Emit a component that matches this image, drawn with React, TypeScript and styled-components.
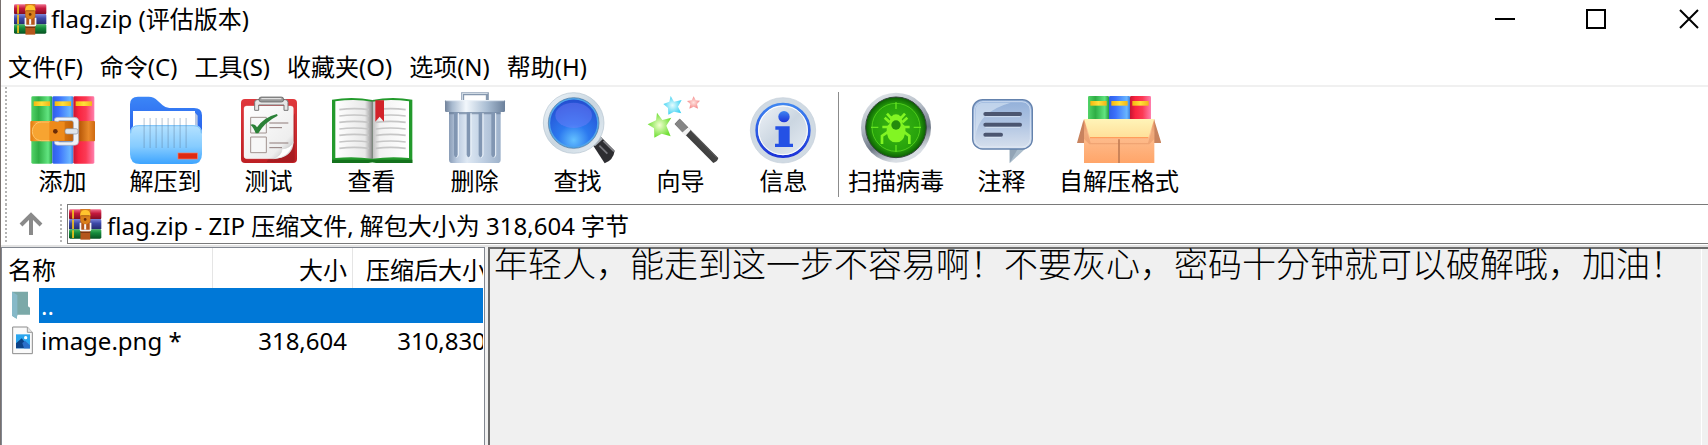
import React from 'react';
import styled, { createGlobalStyle } from 'styled-components';

const GlobalStyle = createGlobalStyle`
  * { box-sizing: border-box; }
  body {
    margin: 0;
    background: #fff;
    color: #000;
    font-family: "Noto Sans", "Noto Sans CJK SC", sans-serif;
    font-size: 24px;
    font-weight: 400;
    line-height: 32px;
  }
  button, input {
    font: inherit;
    color: inherit;
    background: none;
    border: 0;
    padding: 0;
    margin: 0;
  }
`;

const Window = styled.div`
  display: flex;
  flex-direction: column;
  min-height: 100vh;
  border-left: 1px solid #77706e;
  overflow: hidden;
`;

const TitleBar = styled.header`
  display: flex;
  align-items: center;
  height: 38px;
  padding-left: 13px;
`;

const Title = styled.h1`
  flex: 1;
  margin: 0 0 0 4px;
  font: inherit;
  white-space: nowrap;
`;

const WindowButton = styled.button`
  display: grid;
  place-items: center;
  width: 91px;
  height: 38px;

  &:last-child {
    width: 38px;
    margin-left: 29px;
  }
`;

const MenuBar = styled.nav`
  display: flex;
  gap: 17px;
  height: 49px;
  padding: 13px 0 0 7px;
  border-bottom: 2px solid #f0f0f0;
  white-space: nowrap;
`;

const MenuItem = styled.button`
  height: 32px;
`;

const Grip = styled.span`
  width: 2px;
  background: repeating-linear-gradient(#b4b4b4 0 2px, transparent 2px 4px);
`;

const ToolBar = styled.div`
  display: flex;
  height: 117px;
  padding-left: 4px;
  white-space: nowrap;
`;

const Tools = styled.div`
  display: flex;
  padding: 5px 0 0 4px;
`;

const ToolButton = styled.button`
  display: flex;
  flex-direction: column;
  align-items: center;
  gap: 1px;
  min-width: 103px;
  height: 105px;
  padding: 0 6px;
`;

const ToolIcon = styled.svg`
  flex: none;
  width: 84px;
  height: 72px;
`;

const Divider = styled.span`
  width: 1px;
  height: 105px;
  margin: 0 3px;
  background: #8c8c8c;
`;

const AddressBar = styled.div`
  display: flex;
  height: 41px;
  padding-left: 4px;
  border-bottom: 1px solid #fff;
`;

const UpButton = styled.button`
  display: grid;
  place-items: center;
  width: 53px;
  padding-right: 5px;
`;

const AddressField = styled.label`
  display: flex;
  flex: 1;
  align-items: center;
  gap: 5px;
  margin-left: 5px;
  padding-left: 1px;
  border: 1px solid #7a7a7a;
  border-right: 0;
`;

const AddressInput = styled.input`
  flex: 1;
  min-width: 0;
  height: 34px;
  outline: 0;
`;

const Panes = styled.main`
  display: flex;
  flex: 1;
  gap: 3px;
  border-top: 2px solid #e3e3e3;
  background: #f0f0f0;
`;

const FilePane = styled.section`
  flex: none;
  width: 484px;
  padding-right: 1px;
  background: #fff;
  border: 1px solid #828790;
  border-bottom: 0;
`;

const TableClip = styled.div`
  overflow: hidden;
`;

const FileTable = styled.table`
  width: 490px;
  table-layout: fixed;
  border-collapse: separate;
  border-spacing: 0;
  white-space: nowrap;
`;

const HeadCell = styled.th<{ $width: number; $right?: boolean }>`
  width: ${p => p.$width}px;
  height: 40px;
  padding: ${p => (p.$right ? '4px 5px 0 0' : '4px 0 0 6px')};
  border-right: 1px solid #e5e5e5;
  font-weight: inherit;
  text-align: ${p => (p.$right ? 'right' : 'left')};
`;

const Cell = styled.td<{ $selected?: boolean }>`
  height: 35px;
  padding: 0 6px 0 0;
  text-align: right;
  background: ${p => (p.$selected ? '#0078d7' : 'transparent')};
`;

const NameCell = styled.td`
  height: 35px;
  padding: 0;
`;

const NameContent = styled.div`
  display: grid;
  grid-template-columns: 37px 1fr;
  align-items: center;
  height: 35px;
`;

const FileIcon = styled.svg`
  width: 21px;
  height: 29px;
  margin-left: 10px;
`;

const FileName = styled.span<{ $selected?: boolean }>`
  height: 35px;
  padding-left: 2px;
  line-height: 35px;
  color: ${p => (p.$selected ? '#fff' : '#000')};
  background: ${p => (p.$selected ? '#0078d7' : 'transparent')};
`;

const CommentPane = styled.section`
  display: flex;
  flex: 1;
  min-width: 0;
  border: 2px solid #696969;
  border-width: 2px 0 0 2px;
  border-top-color: #6e6e6e;
`;

const Comment = styled.p`
  flex: 1;
  min-width: 0;
  margin: 0;
  padding-left: 4px;
  font-family: "Noto Sans CJK SC", sans-serif;
  font-size: 34px;
  font-weight: 300;
  line-height: 28px;
`;

const ScrollTrack = styled.div`
  width: 7px;
  border-left: 1px solid #fff;
`;

const Books = ({ top, bottom }: { top: number; bottom: number }) => (
  <>
    <linearGradient id="bkG"><stop offset="0" stopColor="#52d468" /><stop offset=".35" stopColor="#2fae45" /><stop offset=".8" stopColor="#62e581" /><stop offset="1" stopColor="#259b3d" /></linearGradient>
    <linearGradient id="bkB"><stop offset="0" stopColor="#2f5fe6" /><stop offset=".3" stopColor="#3b70fb" /><stop offset=".85" stopColor="#69b6ff" /><stop offset="1" stopColor="#3c7edc" /></linearGradient>
    <linearGradient id="bkR"><stop offset="0" stopColor="#c61533" /><stop offset=".25" stopColor="#f9233f" /><stop offset=".6" stopColor="#fb3a55" /><stop offset="1" stopColor="#ff7fae" /></linearGradient>
    <linearGradient id="bkY"><stop offset="0" stopColor="#f6b70f" /><stop offset=".5" stopColor="#ffe03a" /><stop offset="1" stopColor="#f2b418" /></linearGradient>
    {['bkG', 'bkB', 'bkR'].map((id, i) => (
      <g key={id}>
        <rect x={94 + i * 63} y={top} width="63" height={bottom - top} rx="4" fill={`url(#${id})`} />
        <rect x={101 + i * 63} y={top + 15} width="49" height="14" fill="url(#bkY)" />
      </g>
    ))}
  </>
);

const AddIcon = () => (
  <ToolIcon viewBox="63 276 252 216">
    <Books top={289} bottom={491} />
    <linearGradient id="strap"><stop offset="0" stopColor="#e27a0c" /><stop offset=".12" stopColor="#f9a93a" /><stop offset=".35" stopColor="#ee8a17" /><stop offset=".75" stopColor="#b55506" /><stop offset=".9" stopColor="#e8892a" /><stop offset="1" stopColor="#cf6a10" /></linearGradient>
    <rect x="91" y="363" width="194" height="61" rx="3" fill="url(#strap)" />
    <path d="M150 366H124C88 368 88 420 124 422H150" fill="#f7a431" stroke="#ffc56b" strokeWidth="3" />
    <rect x="148" y="366" width="46" height="56" fill="#ee8a1a" />
    <circle cx="166" cy="394" r="7" fill="#6b2c07" />
    <path d="M163 363v-3q0-8 10-8h51q12 0 12 12v60q0 12-12 12h-51q-10 0-10-9v-3h11q2 2 6 2h34q6 0 6-6v-52q0-6-6-6h-34q-4 0-6 3z" fill="#eef2f7" stroke="#9ba3b3" strokeWidth="2" />
    <rect x="195" y="386" width="39" height="16" rx="6" fill="#dfe5ec" stroke="#8c8f9c" strokeWidth="2" />
  </ToolIcon>
);

const ExtractIcon = () => (
  <ToolIcon viewBox="372 276 252 216">
    <linearGradient id="fBack" x2="0" y2="1"><stop offset="0" stopColor="#3b86f7" /><stop offset="1" stopColor="#2254e8" /></linearGradient>
    <linearGradient id="fFront" x2="0" y2="1"><stop offset="0" stopColor="#b5e2ff" /><stop offset=".55" stopColor="#86ccff" /><stop offset="1" stopColor="#3da4ff" /></linearGradient>
    <path d="M390 430V313q0-23 24-23h32q16 0 27 12l15 14q9 8 20 8h74q24 0 24 22v90z" fill="url(#fBack)" />
    <path d="M399 333h182l12 14v50H399z" fill="#b9c7e2" />
    <path d="M399 333h186v50H399z" fill="#fff" />
    <path d="M390 400q0-25 26-25h164q26 0 26 25v62q0 30-30 30H420q-30 0-30-30z" fill="url(#fFront)" />
    <path d="M392 400q0-23 24-23h164q24 0 24 23" fill="none" stroke="#5fb2f5" strokeWidth="2" />
    {[430, 448, 466, 484, 502, 520, 538, 556].map(x => (
      <rect key={x} x={x} y="354" width="5" height="90" fill="#5c7f9f" opacity=".28" />
    ))}
    <rect x="534" y="459" width="58" height="18" fill="#df2a12" stroke="#ff7a5e" strokeWidth="2" />
  </ToolIcon>
);

const TestIcon = () => (
  <ToolIcon viewBox="681 276 252 216">
    <linearGradient id="tRed" x2="0" y2="1"><stop offset="0" stopColor="#e0383c" /><stop offset="1" stopColor="#bd1f24" /></linearGradient>
    <linearGradient id="tPaper" x2="1" y2="1"><stop offset="0" stopColor="#fff" /><stop offset=".75" stopColor="#eee" /><stop offset="1" stopColor="#aaa" /></linearGradient>
    <rect x="723" y="297" width="168" height="192" rx="12" fill="url(#tRed)" />
    <path d="M884 340v139q0 7-8 7H800z" fill="#8e171c" opacity=".5" />
    <path d="M732 326q0-8 8-8h132q8 0 8 8v102q-2 44-58 48h-82q-8 0-8-8z" fill="url(#tPaper)" stroke="#fff" />
    <path d="M880 425q-8 20-34 22 0 20-26 29 52-2 60-51z" fill="#fff" stroke="#c9c9c9" />
    <path d="M764 331v-24q0-8 8-8h84q8 0 8 8v24h-12v-16h-76v16z" fill="#e6e6e6" stroke="#777" strokeWidth="3" />
    <rect x="777" y="291" width="74" height="15" rx="7" fill="#999" stroke="#555" strokeWidth="2" />
    <path d="M784 296h60" stroke="#eee" strokeWidth="3" />
    <path d="M752 352h47v47h-47zM752 411h47v47h-47z" fill="#f7f7f7" stroke="#a0928f" strokeWidth="3" />
    <path d="M808 369h57M808 383h38M808 429h57M808 443h38" stroke="#8e7a78" strokeWidth="3" />
    <path d="M751 374q13-5 20 8 22-31 60-40l2 5q-40 20-58 53h-8q-6-18-16-26z" fill="#2b8137" />
  </ToolIcon>
);

const ViewIcon = () => (
  <ToolIcon viewBox="60 21 252 216">
    <linearGradient id="vL"><stop offset="0" stopColor="#fff" /><stop offset=".8" stopColor="#e8e8e8" /><stop offset="1" stopColor="#8f8f8f" /></linearGradient>
    <linearGradient id="vR"><stop offset="0" stopColor="#bdbdbd" /><stop offset=".2" stopColor="#f2f2f2" /><stop offset="1" stopColor="#fff" /></linearGradient>
    <path d="M66 44q62-10 121 1 58-11 120-1v190H200q-13-4-26 0H66z" fill="#239a2c" />
    <path d="M66 224h241v10H200q-13-4-26 0H66z" fill="#14721d" />
    <path d="M76 49q60-8 111 1v171q-56-8-111-2z" fill="url(#vL)" />
    <path d="M187 50q50-9 110-1v170q-54-6-110 2z" fill="url(#vR)" />
    <path d="M187 45v176" stroke="#666" strokeWidth="2" />
    {[74, 93, 112, 132, 151, 171, 190].map(y => (
      <path key={y} d={`M88 ${y}q45-6 89 0M197 ${y}q45-6 90 0`} fill="none" stroke="#c6c6c6" strokeWidth="5" />
    ))}
    <path d="M196 46h26v64l-13-15-13 15z" fill="#d2232a" />
  </ToolIcon>
);

const DeleteIcon = () => (
  <ToolIcon viewBox="369 21 252 216">
    <linearGradient id="dB"><stop offset="0" stopColor="#8a9db7" /><stop offset=".15" stopColor="#b9c9de" /><stop offset=".35" stopColor="#dfe9f4" /><stop offset=".65" stopColor="#c0d0e3" /><stop offset="1" stopColor="#9db1ca" /></linearGradient>
    <linearGradient id="dL"><stop offset="0" stopColor="#71829a" /><stop offset=".12" stopColor="#a8bacf" /><stop offset=".35" stopColor="#f2f7fc" /><stop offset=".7" stopColor="#a9bdd3" /><stop offset="1" stopColor="#6b809b" /></linearGradient>
    <path d="M458 50V26h74v24" fill="none" stroke="#8698ae" strokeWidth="9" />
    <path d="M457 48V25h76" fill="none" stroke="#dfe7f0" strokeWidth="3" />
    <path d="M417 78h155v146q0 10-10 10H427q-10 0-10-10z" fill="url(#dB)" />
    <path d="M417 80h155v8H417z" fill="#5f7591" opacity=".6" />
    {[432, 470, 506, 544].map(x => (
      <g key={x}>
        <path d={`M${x} 82h11v128q-5 14-11 0z`} fill="#8196b2" />
        <path d={`M${x + 13} 84v126q-2 6-5 8`} fill="none" stroke="#eef4fa" strokeWidth="3" />
      </g>
    ))}
    <rect x="405" y="45" width="180" height="36" rx="4" fill="url(#dL)" />
    <path d="M407 47h176" stroke="#eef3f9" strokeWidth="3" />
  </ToolIcon>
);

const FindIcon = () => (
  <ToolIcon viewBox="678 21 252 216">
    <radialGradient id="sG" cx=".5" cy=".85" r=".8"><stop offset="0" stopColor="#63c0ff" /><stop offset=".4" stopColor="#2c79ef" /><stop offset="1" stopColor="#2450d2" /></radialGradient>
    <linearGradient id="sR" x2="1" y2="1"><stop offset="0" stopColor="#eef5fa" /><stop offset=".5" stopColor="#c9d6e0" /><stop offset="1" stopColor="#e6eef4" /></linearGradient>
    <path d="M844 173l26-20 44 44q-4 28-30 38z" fill="#2d2d31" />
    <path d="M844 173l26-20 9 9-24 22z" fill="#aab0b6" />
    <path d="M880 168l32 31" stroke="#85858a" strokeWidth="5" />
    <path d="M868 182l24 24" stroke="#77777d" strokeWidth="5" />
    <circle cx="791" cy="114" r="91" fill="url(#sR)" stroke="#b4c2ce" strokeWidth="2" />
    <circle cx="791" cy="114" r="73" fill="url(#sG)" stroke="#4fa5ea" strokeWidth="5" />
    <circle cx="791" cy="114" r="76" fill="none" stroke="#48709c" strokeWidth="2" />
    <ellipse cx="791" cy="91" rx="55" ry="38" fill="#8080ff" opacity=".38" />
  </ToolIcon>
);

const WizardIcon = () => (
  <ToolIcon viewBox="57 21 252 216">
    <radialGradient id="wG"><stop offset="0" stopColor="#f2ffd0" /><stop offset="1" stopColor="#70df35" /></radialGradient>
    <radialGradient id="wC"><stop offset="0" stopColor="#e5fdff" /><stop offset="1" stopColor="#48d3f2" /></radialGradient>
    <radialGradient id="wP"><stop offset="0" stopColor="#ffe3df" /><stop offset="1" stopColor="#f58c8c" /></radialGradient>
    <path d="M111 83l16 22 27-7-15 24 13 32-27-8-22 12-1-28-19-12 25-12z" fill="url(#wG)" />
    <path d="M152 33l10 17 23-5-11 20 10 20-22-5-17 9-1-20-14-12 18-7z" fill="url(#wC)" />
    <path d="M221 34l6 12 13 1-9 10 3 14-13-6-13 6 3-14-10-9 14-2z" fill="url(#wP)" />
    <linearGradient id="wS" x1="0" y1="1" x2=".5" y2=".5"><stop offset="0" stopColor="#111" /><stop offset="1" stopColor="#444" /></linearGradient>
    <path d="M164 117l15-16 116 118q-2 10-15 15z" fill="url(#wS)" />
    <path d="M164 117l15-16 24 25-15 17z" fill="#858585" />
    <path d="M186 143l19-17 8 8-16 18z" fill="#f2f2f2" />
    <path d="M214 139l77 79" stroke="#666" strokeWidth="3" />
  </ToolIcon>
);

const InfoIcon = () => (
  <ToolIcon viewBox="366 21 252 216">
    <linearGradient id="iS" x2="1" y2="1"><stop offset="0" stopColor="#f1f5f9" /><stop offset=".5" stopColor="#cbd6e1" /><stop offset="1" stopColor="#e9eff5" /></linearGradient>
    <linearGradient id="iB" x2="0" y2="1"><stop offset="0" stopColor="#3f86f1" /><stop offset="1" stopColor="#1c33d8" /></linearGradient>
    <circle cx="489" cy="136" r="98" fill="#d0dae3" stroke="#c4cfd9" strokeWidth="2" />
    <circle cx="489" cy="136" r="79" fill="url(#iS)" stroke="url(#iB)" strokeWidth="8" />
    <circle cx="489" cy="136" r="73" fill="none" stroke="#fff" strokeWidth="3" />
    <circle cx="492" cy="95" r="17" fill="url(#iB)" />
    <path d="M466 124h43v52h10v10h-54v-10h11v-42h-10z" fill="#2451e5" />
  </ToolIcon>
);

const VirusIcon = () => (
  <ToolIcon viewBox="705 21 252 216">
    <linearGradient id="xS" x2=".4" y2="1"><stop offset="0" stopColor="#edf1f4" /><stop offset=".45" stopColor="#b2bac4" /><stop offset=".75" stopColor="#6f7987" /><stop offset="1" stopColor="#d9dee4" /></linearGradient>
    <radialGradient id="xG"><stop offset="0" stopColor="#3bb516" /><stop offset=".75" stopColor="#27a30b" /><stop offset="1" stopColor="#0c5e04" /></radialGradient>
    <circle cx="831" cy="128" r="105" fill="url(#xS)" />
    <circle cx="831" cy="127" r="91" fill="url(#xG)" stroke="#34463a" strokeWidth="3" />
    <circle cx="831" cy="127" r="72" fill="none" stroke="#61df24" strokeWidth="3" opacity=".7" />
    <path d="M831 52v20M831 180v20M756 127h22M884 127h22" stroke="#64e41f" strokeWidth="4" />
    <g fill="none" stroke="#82f523" strokeWidth="8">
      <path d="M804 86l11 12h32l11-12M812 112l-15-14M850 112l15-14M810 126h-20M852 126h20M808 140l-19 13v24M854 140l17 13v24" />
    </g>
    <path d="M811 117q2-29 20-29t20 29q12 8 7 29-5 26-27 26t-27-26q-4-21 7-29z" fill="#82f523" />
    <circle cx="831" cy="120" r="14" fill="#248c0c" />
  </ToolIcon>
);

const CommentIcon = () => (
  <ToolIcon viewBox="90 21 252 216">
    <linearGradient id="cB" x2="0" y2="1"><stop offset="0" stopColor="#91afd9" /><stop offset=".5" stopColor="#b1c5e2" /><stop offset="1" stopColor="#d8e1ee" /></linearGradient>
    <path d="M239 188h50l-50 47z" fill="#aabccb" />
    <path d="M239 192h24l-24 42z" fill="#8294a8" opacity=".6" />
    <rect x="128" y="44" width="179" height="148" rx="30" fill="url(#cB)" stroke="#6482ad" strokeWidth="4" />
    <path d="M137 155q5-74 105-102H160q-23 0-23 23z" fill="#e2ecf8" opacity=".55" />
    <rect x="134" y="50" width="167" height="136" rx="25" fill="none" stroke="#e5eefa" strokeWidth="3" opacity=".7" />
    <g stroke="#4c5670" strokeWidth="12" strokeLinecap="round"><path d="M166 87h104M166 119h104M166 149h47" /></g>
    <g stroke="#e6eef8" strokeWidth="2"><path d="M166 95h104M166 127h104M166 157h47" /></g>
  </ToolIcon>
);

const SfxIcon = () => (
  <ToolIcon viewBox="441 21 252 216">
    <linearGradient id="bx" x2="0" y2="1"><stop offset="0" stopColor="#e89260" /><stop offset=".3" stopColor="#fdc093" /><stop offset="1" stopColor="#ffa569" /></linearGradient>
    <linearGradient id="fl" x2="0" y2="1"><stop offset="0" stopColor="#fff4b8" /><stop offset="1" stopColor="#ffdf99" /></linearGradient>
    <g transform="translate(380 -256)"><Books top={289} bottom={362} /></g>
    <path d="M461 103l-20 71h26zM672 103l22 71h-28z" fill="#c8835e" />
    <path d="M462 103h211v131H462z" fill="url(#bx)" />
    <path d="M462 110l20 64h172l19-64v52l-15 16H478l-16-16z" fill="#cf7b4b" opacity=".3" />
    <path d="M462 102h211l-18 57H480z" fill="url(#fl)" />
    <path d="M480 158h175" stroke="#ff9150" strokeWidth="3" />
    <path d="M567 163v71" stroke="#c27c54" strokeWidth="5" />
  </ToolIcon>
);

const ArchiveIcon = () => (
  <svg width="33" height="31" viewBox="42 11 98 92" aria-hidden="true">
    <linearGradient id="ar" x2="0" y2="1"><stop offset="0" stopColor="#ef6d8a" /><stop offset=".4" stopColor="#c4193c" /><stop offset="1" stopColor="#7d0c22" /></linearGradient>
    <linearGradient id="ab" x2="0" y2="1"><stop offset="0" stopColor="#7d86d8" /><stop offset=".4" stopColor="#3d49a8" /><stop offset="1" stopColor="#252a6c" /></linearGradient>
    <linearGradient id="ag" x2="0" y2="1"><stop offset="0" stopColor="#49b864" /><stop offset=".4" stopColor="#158a3b" /><stop offset="1" stopColor="#075322" /></linearGradient>
    <rect x="42" y="12" width="96" height="30" rx="4" fill="url(#ar)" />
    <rect x="42" y="41" width="96" height="31" rx="4" fill="url(#ab)" />
    <rect x="42" y="71" width="96" height="28" rx="4" fill="url(#ag)" />
    <path d="M54 14v26M54 43v27M54 74v23" stroke="#f5c51c" strokeWidth="5" />
    <rect x="76" y="12" width="29" height="90" fill="#b4561b" />
    <path d="M76 12h29v34q-4 10-14 10t-15-10z" fill="#d9801c" />
    <path d="M75 30q1-16 15-16t16 16z" fill="#ffc42e" />
    <path d="M78 31h25" stroke="#8f4a10" strokeWidth="2" />
    <circle cx="90" cy="42" r="4" fill="#6b2c07" />
    <path d="M76 52v20q0 3 4 3h22q4 0 4-3V52" fill="none" stroke="#f4f4f4" strokeWidth="5" />
    <path d="M90 56v16" stroke="#f8f8f8" strokeWidth="6" />
    <path d="M76 80h29" stroke="#6c2c0c" strokeWidth="3" />
  </svg>
);

const TOOLS = [
  { label: '添加', Icon: AddIcon },
  { label: '解压到', Icon: ExtractIcon },
  { label: '测试', Icon: TestIcon },
  { label: '查看', Icon: ViewIcon },
  { label: '删除', Icon: DeleteIcon },
  { label: '查找', Icon: FindIcon },
  { label: '向导', Icon: WizardIcon },
  { label: '信息', Icon: InfoIcon },
];

const EXTRA_TOOLS = [
  { label: '扫描病毒', Icon: VirusIcon },
  { label: '注释', Icon: CommentIcon },
  { label: '自解压格式', Icon: SfxIcon },
];

const MENUS = ['文件(F)', '命令(C)', '工具(S)', '收藏夹(O)', '选项(N)', '帮助(H)'];

export default function App() {
  return (
    <Window>
      <GlobalStyle />
      <TitleBar>
        <ArchiveIcon />
        <Title>flag.zip (评估版本)</Title>
        <WindowButton aria-label="最小化">
          <svg width="20" height="20"><path d="M0 10h20" stroke="#000" strokeWidth="2" /></svg>
        </WindowButton>
        <WindowButton aria-label="最大化">
          <svg width="20" height="20"><path d="M1 1h18v18H1z" fill="none" stroke="#000" strokeWidth="2" /></svg>
        </WindowButton>
        <WindowButton aria-label="关闭">
          <svg width="20" height="20"><path d="M1 1l18 18M19 1L1 19" stroke="#000" strokeWidth="2" /></svg>
        </WindowButton>
      </TitleBar>
      <MenuBar>
        {MENUS.map(m => <MenuItem key={m}>{m}</MenuItem>)}
      </MenuBar>
      <ToolBar>
        <Grip />
        <Tools>
          {TOOLS.map(({ label, Icon }) => (
            <ToolButton key={label}><Icon />{label}</ToolButton>
          ))}
          <Divider />
          {EXTRA_TOOLS.map(({ label, Icon }) => (
            <ToolButton key={label}><Icon />{label}</ToolButton>
          ))}
        </Tools>
      </ToolBar>
      <AddressBar>
        <Grip />
        <UpButton aria-label="向上">
          <svg width="24" height="24" viewBox="0 0 24 24" fill="none" stroke="#8a8a8a" strokeWidth="4">
            <path d="M12 23V3M2 13L12 3l10 10" />
          </svg>
        </UpButton>
        <Grip />
        <AddressField>
          <ArchiveIcon />
          <AddressInput aria-label="地址" readOnly value="flag.zip - ZIP 压缩文件, 解包大小为 318,604 字节" />
        </AddressField>
      </AddressBar>
      <Panes>
        <FilePane>
          <TableClip>
            <FileTable>
              <thead>
                <tr>
                  <HeadCell $width={211}>名称</HeadCell>
                  <HeadCell $width={140} $right>大小</HeadCell>
                  <HeadCell $width={139} $right>压缩后大小</HeadCell>
                </tr>
              </thead>
              <tbody>
                <tr>
                  <NameCell>
                    <NameContent>
                      <FileIcon viewBox="36 292 63 87">
                        <path d="M36 294h48v44l6 4v21H52l-2 12-14-9z" fill="#7ba9a8" />
                        <path d="M36 294l16 10v59l-2 12-14-9z" fill="#86b9c8" />
                      </FileIcon>
                      <FileName $selected>..</FileName>
                    </NameContent>
                  </NameCell>
                  <Cell $selected />
                  <Cell $selected />
                </tr>
                <tr>
                  <NameCell>
                    <NameContent>
                      <FileIcon viewBox="36 392 63 87">
                        <path d="M38 395h44l15 16v64H38z" fill="#fafafa" stroke="#8b8b8b" strokeWidth="3" />
                        <path d="M82 395v16h15" fill="#e4e4e4" stroke="#9a9a9a" strokeWidth="3" />
                        <path d="M48 417h42v42H48z" fill="#2aa5ee" />
                        <path d="M48 444l17-15 25 30H48z" fill="#0c4287" />
                        <path d="M67 443l8-7 15 14v9H72z" fill="#2a6fc9" />
                        <circle cx="77" cy="427" r="5" fill="#fff" />
                      </FileIcon>
                      <FileName>image.png *</FileName>
                    </NameContent>
                  </NameCell>
                  <Cell>318,604</Cell>
                  <Cell>310,830</Cell>
                </tr>
              </tbody>
            </FileTable>
          </TableClip>
        </FilePane>
        <CommentPane>
          <Comment>年轻人，能走到这一步不容易啊！不要灰心，密码十分钟就可以破解哦，加油！</Comment>
          <ScrollTrack />
        </CommentPane>
      </Panes>
    </Window>
  );
}
